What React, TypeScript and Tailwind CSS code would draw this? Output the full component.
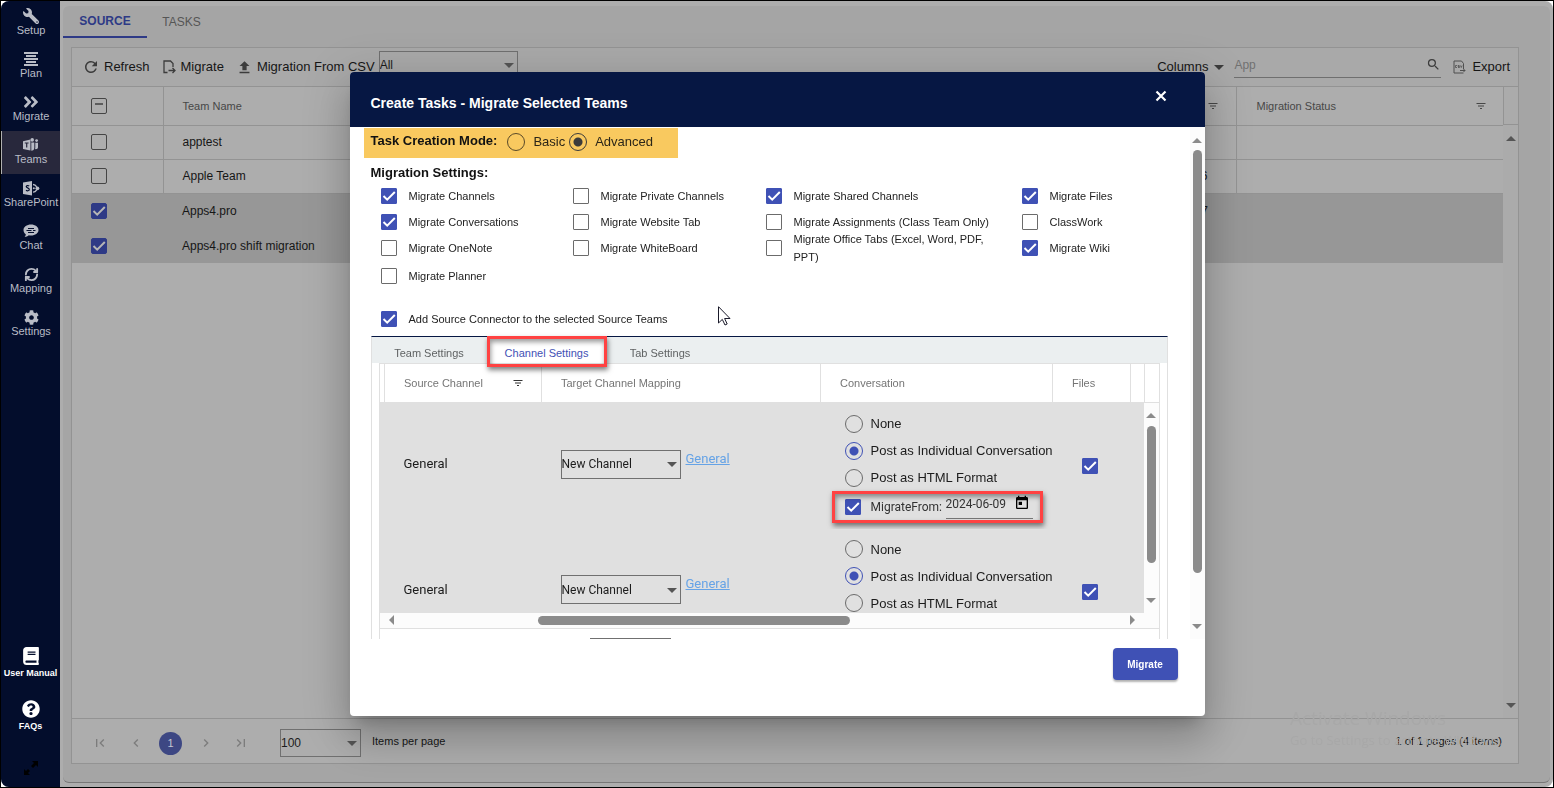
import React from "react";
import { RefreshCw } from "lucide-react";
import {
  FaWrench,
  FaAngleDoubleRight,
  FaCog,
  FaBook,
  FaQuestionCircle,
} from "react-icons/fa";
import {
  MdRefresh,
  MdFileUpload,
  MdSearch,
  MdFilterList,
  MdToday,
  MdFirstPage,
  MdLastPage,
  MdChevronLeft,
  MdChevronRight,
} from "react-icons/md";

function PlanIcon() {
  return (
    <svg width="16" height="14" viewBox="0 0 16 14" fill="currentColor" aria-hidden="true">
      <rect x="1" y="0" width="14" height="2" />
      <rect x="3" y="3" width="10" height="2" />
      <rect x="1" y="6" width="14" height="2" />
      <rect x="3" y="9" width="10" height="2" />
      <rect x="1" y="12" width="14" height="2" />
    </svg>
  );
}

function TeamsIcon() {
  return (
    <svg width="16" height="14" viewBox="0 0 16 14" fill="currentColor" aria-hidden="true">
      <path d="M0 3.2 7.4 1.6v11L0 11z" />
      <path d="M1.8 5h3.8M3.7 5v4.4" stroke="#28283c" strokeWidth="1.2" fill="none" />
      <circle cx="9.2" cy="1.9" r="1.8" />
      <circle cx="13.6" cy="2.6" r="1.4" />
      <path d="M8.3 4.6h3v5.2c0 1.9-1.2 2.9-3 2.9z" />
      <path d="M12.3 4.8H15v4.4c0 1.3-.9 2-2.4 2-.2 0-.4 0-.6-.1.2-.4.3-.9.3-1.5z" />
    </svg>
  );
}

function SharePointIcon() {
  return (
    <svg width="17" height="15" viewBox="0 0 17 15" fill="currentColor" aria-hidden="true">
      <path d="M0 1.6 9 0v14.4L0 12.9z" />
      <path
        d="M6.2 4.9c-.7-.5-3-.7-3 .7 0 1.500 3.100 1 3.100 2.900 0 1.600-2.300 1.500-3.300.8"
        stroke="#030d2c"
        strokeWidth="1.2"
        fill="none"
      />
      <path
        d="M10 3.500c1.800 0 2.800.8 3.700 2.300M10 11.100c1.800 0 2.800-.8 3.700-2.300"
        stroke="currentColor"
        strokeWidth="1.300"
        fill="none"
      />
      <circle cx="14.400" cy="7.300" r="1.900" />
      <circle cx="10.800" cy="7.300" r="1" />
    </svg>
  );
}

function ChatIcon() {
  return (
    <svg width="16" height="14" viewBox="0 0 16 14" aria-hidden="true">
      <path
        d="M8 .5c4.200 0 7.500 2.400 7.500 5.500S12.200 11.500 8 11.500c-.8 0-1.500-.1-2.200-.2C4.600 12.400 3 13 1.600 13c.8-.8 1.100-1.700 1.200-2.700C1.400 9.300.5 7.700.5 6 .5 2.900 3.800.5 8 .5z"
        fill="currentColor"
      />
      <path d="M5 4.500h6M3.500 6.500h5M10 6.500h2.500M5 8.500h6" stroke="#030d2c" fill="none" />
    </svg>
  );
}

function ExpandIcon() {
  return (
    <svg width="14" height="14" viewBox="0 0 14 14" aria-hidden="true">
      <path d="M8 0h6v6l-2-2-3 3-2-2 3-3zM0 8l2 2 2-2 2 2-2 2 2 2H0z" fill="#000" />
    </svg>
  );
}

function FileMoveIcon() {
  return (
    <svg width="13" height="14" viewBox="0 0 13 14" fill="none" stroke="#3c3c3c" strokeWidth="1.300" aria-hidden="true">
      <path d="M4.500 12.500H1V1h6.500L10 3.500V7" />
      <path d="M5.500 10.500h6.500M9.500 8l2.500 2.500L9.500 13" />
    </svg>
  );
}

function CsvIcon() {
  return (
    <svg width="13" height="14" viewBox="0 0 13 14" fill="none" stroke="#4f4f4f" strokeWidth="1" aria-hidden="true">
      <path d="M10.500 9V3.500L8.500 1H1v12h9.500" />
      <path d="M4 5.500H2.500v2H4M6.500 5.500H5v1h1.500v1H5M7.500 5.500l.8 2 .8-2" strokeWidth="0.800" />
      <path d="M7 10.500h5M10.500 9l1.500 1.500-1.500 1.500" />
    </svg>
  );
}

function CloseIcon() {
  return (
    <svg width="12" height="12" viewBox="0 0 12 12" aria-hidden="true">
      <path d="M1.500 1.500l9 9M10.500 1.500l-9 9" stroke="currentColor" strokeWidth="2.200" fill="none" />
    </svg>
  );
}

const navItems = [
  { label: "Setup", icon: <FaWrench size={16} className="-scale-x-100" /> },
  { label: "Plan", icon: <PlanIcon /> },
  { label: "Migrate", icon: <FaAngleDoubleRight size={18} /> },
  { label: "Teams", icon: <TeamsIcon />, active: true },
  { label: "SharePoint", icon: <SharePointIcon /> },
  { label: "Chat", icon: <ChatIcon /> },
  { label: "Mapping", icon: <RefreshCw size={15} strokeWidth={3} /> },
  { label: "Settings", icon: <FaCog size={15} /> },
];

function Sidebar() {
  return (
    <nav className="flex w-[59px] shrink-0 flex-col bg-[#030d2c] pt-px text-[11px] leading-3 text-[#b9bcc6]">
      {navItems.map((item) => (
        <a
          key={item.label}
          href="#"
          className={
            item.active
              ? "flex h-[43px] flex-col items-center border-l border-[#b0b0b0] bg-[#28283c] pt-[6px]"
              : "flex h-[43px] flex-col items-center border-l border-transparent pt-[6px]"
          }
        >
          <span className="flex h-4 items-center justify-center">{item.icon}</span>
          <span>{item.label}</span>
        </a>
      ))}
      <div className="mt-auto flex flex-col text-[9px] font-bold text-white">
        <a href="#" className="flex h-[53px] flex-col items-center">
          <span className="flex h-5 items-center">
            <FaBook size={18} />
          </span>
          <span className="mt-px whitespace-nowrap">User Manual</span>
        </a>
        <a href="#" className="flex h-[62px] flex-col items-center">
          <span className="flex h-5 items-center">
            <FaQuestionCircle size={18} />
          </span>
          <span className="mt-px">FAQs</span>
        </a>
        <button type="button" aria-label="Expand menu" className="flex h-[26px] justify-center">
          <ExpandIcon />
        </button>
      </div>
    </nav>
  );
}

function Check({
  id,
  checked = false,
  dim = false,
  label,
}: {
  id: string;
  checked?: boolean;
  dim?: boolean;
  label?: string;
}) {
  return (
    <span className="relative inline-flex h-4 w-4 shrink-0">
      <input
        id={id}
        type="checkbox"
        aria-label={label}
        defaultChecked={checked}
        className={
          dim
            ? "peer h-4 w-4 appearance-none rounded-[2px] border border-[#454545] checked:border-[#2e3a86] checked:bg-[#2e3a86]"
            : "peer h-4 w-4 appearance-none rounded-[1px] border border-[#6b6b6b] bg-white checked:border-[#3f51b5] checked:bg-[#3f51b5]"
        }
      />
      <svg
        viewBox="0 0 16 16"
        className={
          dim
            ? "pointer-events-none absolute inset-0 hidden text-[#b5b5b5] peer-checked:block"
            : "pointer-events-none absolute inset-0 hidden text-white peer-checked:block"
        }
        aria-hidden="true"
      >
        <path d="M2.500 8 6.200 11.700 13.800 4" fill="none" stroke="currentColor" strokeWidth="2" />
      </svg>
    </span>
  );
}

function Radio({
  id,
  name,
  label,
  checked = false,
  grey = false,
}: {
  id: string;
  name: string;
  label: string;
  checked?: boolean;
  grey?: boolean;
}) {
  return (
    <label htmlFor={id} className="flex items-center gap-2 whitespace-nowrap">
      <input
        id={id}
        name={name}
        type="radio"
        defaultChecked={checked}
        className={
          grey
            ? "h-[18px] w-[18px] shrink-0 appearance-none rounded-full border border-[#5a4a28] checked:border-[#3b3b3b] checked:bg-[radial-gradient(circle,#3b3b3b_0_4px,transparent_5px)]"
            : "h-[18px] w-[18px] shrink-0 appearance-none rounded-full border border-[#6b6b6b] checked:border-[#3f51b5] checked:bg-[radial-gradient(circle,#3f51b5_0_4px,transparent_5px)]"
        }
      />
      {label}
    </label>
  );
}

function Arrow({ dir, className = "" }: { dir: "up" | "down" | "left" | "right"; className?: string }) {
  const points = {
    up: "0,8 5,3 10,8",
    down: "0,3 5,8 10,3",
    left: "8,0 3,5 8,10",
    right: "3,0 8,5 3,10",
  };
  return (
    <svg width="10" height="10" viewBox="0 0 10 10" fill="currentColor" className={className} aria-hidden="true">
      <polygon points={points[dir]} />
    </svg>
  );
}

function Select({
  label,
  value,
  className,
}: {
  label: string;
  value: string;
  className: string;
}) {
  return (
    <span className={"relative inline-flex items-center " + className}>
      <select
        aria-label={label}
        defaultValue={value}
        className="h-full w-full appearance-none border border-[#707070] text-[12px] text-[#1c1c1c]"
      >
        <option>{value}</option>
      </select>
      <Arrow dir="down" className="pointer-events-none absolute right-1 text-[#555555]" />
    </span>
  );
}

const teams = [
  { name: "apptest", count: "", checked: false },
  { name: "Apple Team", count: "6", checked: false },
  { name: "Apps4.pro", count: "7", checked: true },
  { name: "Apps4.pro shift migration", count: "", checked: true },
];

function TeamsGrid() {
  return (
    <section className="mt-[9px] mr-[31px] mb-[18px] ml-2 flex flex-1 flex-col border border-[#939393] bg-[#adadad]">
      <div className="flex h-[39px] shrink-0 items-center border-b border-[#939393] bg-[#a9a9a9] pr-2 pl-[10px] text-[13px] text-[#161616]">
        <button type="button" className="flex items-center gap-1">
          <MdRefresh size={18} className="text-[#3c3c3c]" />
          Refresh
        </button>
        <button type="button" className="ml-[13px] flex items-center gap-[5px]">
          <FileMoveIcon />
          Migrate
        </button>
        <button type="button" className="ml-3 flex items-center gap-1 whitespace-nowrap">
          <MdFileUpload size={17} className="text-[#3c3c3c]" />
          Migration From CSV
        </button>
        <Select label="Filter" value="All" className="mb-1 ml-1 h-7 w-[139px]" />
        <button type="button" className="ml-auto flex items-center gap-[6px]">
          Columns
          <Arrow dir="down" className="text-[#3c3c3c]" />
        </button>
        <label className="mb-1 ml-[10px] flex h-[26px] w-[207px] items-center border-b border-[#6f6f6f]">
          <input
            type="text"
            aria-label="Search"
            placeholder="App"
            className="min-w-0 flex-1 text-[12px] placeholder:text-[#717171]"
          />
          <MdSearch size={15} className="text-[#3c3c3c]" />
        </label>
        <button type="button" className="ml-3 flex items-center gap-[6px]">
          <CsvIcon />
          Export
        </button>
      </div>
      <div className="flex flex-1">
        <table className="w-full table-fixed self-start text-left text-[12px] text-[#161616]">
          <thead>
            <tr className="h-[38px] border-b border-[#939393] text-[11px] text-[#474747]">
              <th className="w-[91px] border-r border-[#939393] pl-[19px]">
                <span className="flex h-4 w-4 items-center justify-center rounded-[2px] border border-[#454545]">
                  <span className="mb-1 h-[2px] w-2 bg-[#5c5c5c]" />
                </span>
              </th>
              <th className="pl-[19px] font-normal">Team Name</th>
              <th className="w-[120px] border-r border-[#939393] pr-[17px]">
                <MdFilterList size={12} className="ml-auto" />
              </th>
              <th className="w-[267px] pl-5 font-normal">
                <span className="flex items-center justify-between pr-4">
                  Migration Status
                  <MdFilterList size={12} />
                </span>
              </th>
            </tr>
          </thead>
          <tbody>
            {teams.map((t, i) => (
              <tr
                key={t.name}
                className={
                  t.checked
                    ? "h-[35px] bg-[#979797]"
                    : "h-[34px] border-b border-[#939393]"
                }
              >
                <td className={t.checked ? "pl-[19px]" : "border-r border-[#939393] pl-[19px]"}>
                  <span className="flex">
                    <Check id={"team-" + i} checked={t.checked} dim label={"Select " + t.name} />
                  </span>
                </td>
                <td className="pl-[19px]">{t.name}</td>
                <td
                  className={
                    t.checked ? "pr-7 text-right" : "border-r border-[#939393] pr-7 text-right"
                  }
                >
                  {t.count}
                </td>
                <td />
              </tr>
            ))}
          </tbody>
        </table>
        <div className="flex w-[15px] shrink-0 flex-col items-center bg-[#ababab] pb-2 text-[#555555]">
          <span className="h-[38px] w-full border-b border-l border-[#939393]" />
          <Arrow dir="up" className="mt-2" />
          <Arrow dir="down" className="mt-auto" />
        </div>
      </div>
      <div className="flex h-[45px] shrink-0 items-center border-t border-[#939393] pt-1 pr-4 pl-5 text-[11px] text-[#161616]">
        <div className="flex items-center text-[#7c7c7c]">
          <button type="button" aria-label="First page" className="w-9">
            <MdFirstPage size={16} />
          </button>
          <button type="button" aria-label="Previous page" className="w-[31px]">
            <MdChevronLeft size={16} />
          </button>
          <button
            type="button"
            className="h-[23px] w-[23px] rounded-full bg-[#3d4783] text-[#c4c6d2]"
          >
            1
          </button>
          <button type="button" aria-label="Next page" className="ml-4 w-[35px]">
            <MdChevronRight size={16} />
          </button>
          <button type="button" aria-label="Last page" className="w-9">
            <MdLastPage size={16} />
          </button>
        </div>
        <Select label="Items per page" value="100" className="ml-[11px] h-7 w-[81px]" />
        <span className="ml-[11px] pb-1">Items per page</span>
        <span className="ml-auto pb-1">1 of 1 pages (4 items)</span>
      </div>
    </section>
  );
}

const settings: [string, boolean][] = [
  ["Migrate Channels", true],
  ["Migrate Private Channels", false],
  ["Migrate Shared Channels", true],
  ["Migrate Files", true],
  ["Migrate Conversations", true],
  ["Migrate Website Tab", false],
  ["Migrate Assignments (Class Team Only)", false],
  ["ClassWork", false],
  ["Migrate OneNote", false],
  ["Migrate WhiteBoard", false],
  ["Migrate Office Tabs (Excel, Word, PDF, PPT)", false],
  ["Migrate Wiki", true],
  ["Migrate Planner", false],
];

function ChannelRow({ index, from }: { index: number; from?: string }) {
  const id = "channel-" + index;
  return (
    <tr className="h-[126px]">
      <td />
      <td className="pb-1 pl-[19px] font-[Roboto,sans-serif] text-[13px]">General</td>
      <td className="pb-1 pl-[19px]">
        <span className="flex font-[Roboto,sans-serif]">
          <Select label="Target channel" value="New Channel" className="h-[29px] w-[120px]" />
          <a href="#" className="ml-[5px] text-[13px] leading-[18px] text-[#66a3e6] underline">
            General
          </a>
        </span>
      </td>
      <td className="overflow-hidden pl-6 align-top text-[13px]">
        <div className="flex flex-col pt-[7px]">
          <div className="flex h-[27px] items-center">
            <Radio id={id + "-none"} name={id} label="None" />
          </div>
          <div className="flex h-[27px] items-center">
            <Radio id={id + "-post"} name={id} label="Post as Individual Conversation" checked />
          </div>
          <div className="flex h-[27px] items-center">
            <Radio id={id + "-html"} name={id} label="Post as HTML Format" />
          </div>
          {from && (
            <div className="relative flex h-8 items-center font-[Roboto,sans-serif] text-[12px]">
              <Check id={id + "-from"} checked />
              <label htmlFor={id + "-from"} className="ml-[10px] w-[75px] text-[#333333]">
                MigrateFrom:
              </label>
              <span className="flex h-6 w-[87px] items-start border-b border-[#777777]">
                <input
                  type="text"
                  aria-label="Migrate from date"
                  defaultValue={from}
                  className="w-[68px] text-[#333333]"
                />
                <MdToday size={16} className="shrink-0 text-black" />
              </span>
              <span className="pointer-events-none absolute inset-y-0 right-[10px] -left-[13px] border-[3px] border-[#ff4242] shadow-[1px_3px_5px_rgba(0,0,0,0.5),inset_1px_3px_5px_rgba(0,0,0,0.4)]" />
            </div>
          )}
        </div>
      </td>
      <td className="pl-[29px]">
        <span className="flex">
          <Check id={id + "-files"} checked label="Files" />
        </span>
      </td>
      <td />
    </tr>
  );
}

function ChannelTable() {
  const th = "border-r border-[#e0e0e0] pl-[19px] font-normal";
  return (
    <div className="mx-[7px] border-x border-t border-[#e0e0e0]">
      <div className="flex h-[249px] overflow-hidden">
        <table className="w-full table-fixed self-start bg-[#e0e0e0] text-left text-[#1c1c1c]">
          <thead>
            <tr className="h-[39px] border-b border-[#e0e0e0] bg-white text-[11px] text-[#757575]">
              <th className="w-[5px] border-r border-[#e0e0e0]" />
              <th className={th + " w-[157px]"}>
                <span className="flex items-center justify-between pr-[17px]">
                  Source Channel
                  <MdFilterList size={12} className="text-[#333333]" />
                </span>
              </th>
              <th className={th + " w-[279px]"}>Target Channel Mapping</th>
              <th className={th + " w-[232px]"}>Conversation</th>
              <th className={th + " w-[78px]"}>Files</th>
              <th />
            </tr>
          </thead>
          <tbody>
            <ChannelRow index={0} from="2024-06-09" />
            <ChannelRow index={1} />
          </tbody>
        </table>
        <div className="flex w-[15px] shrink-0 flex-col items-center bg-[#fcfcfc] pb-2 text-[#8b8b8b]">
          <span className="h-[39px] w-full shrink-0 border-b border-l border-[#e0e0e0] bg-white" />
          <Arrow dir="up" className="mt-[7px] shrink-0" />
          <span className="mt-[6px] h-[137px] w-[9px] rounded-full bg-[#8b8b8b]" />
          <Arrow dir="down" className="mt-auto" />
        </div>
      </div>
      <div className="flex h-4 items-center border-b border-[#e0e0e0] bg-[#fcfcfc] pr-[22px] pl-[6px] text-[#8b8b8b]">
        <Arrow dir="left" />
        <div className="flex flex-1 pl-[142px]">
          <span className="h-[9px] w-[53%] rounded-full bg-[#8b8b8b]" />
        </div>
        <Arrow dir="right" />
      </div>
      <div className="flex pt-[9px] pl-[210px]">
        <Select label="Page size" value="" className="h-7 w-[81px]" />
      </div>
    </div>
  );
}

function TaskDialog() {
  return (
    <div className="fixed inset-0 flex items-center justify-center">
      <div
        role="dialog"
        aria-labelledby="dialog-title"
        className="flex w-[855px] max-w-full flex-col overflow-hidden rounded-[4px] bg-white shadow-[0_11px_15px_-7px_rgba(0,0,0,0.2),0_24px_38px_3px_rgba(0,0,0,0.14),0_9px_46px_8px_rgba(0,0,0,0.12)]"
      >
        <header className="flex h-[55px] items-center justify-between bg-[#061743] pr-[38px] pl-[21px] text-white">
          <h1 id="dialog-title" className="pt-2 text-[14px] font-bold">
            Create Tasks - Migrate Selected Teams
          </h1>
          <button type="button" aria-label="Close" className="pb-[7px]">
            <CloseIcon />
          </button>
        </header>
        <div className="flex h-[65vh] overflow-hidden">
          <div className="min-w-0 flex-1 pr-[22px] pl-[21px]">
            <div className="mt-px -ml-[7px] flex h-[30px] w-[314px] items-center bg-[#f9c95f] pb-[2px] pl-[7px] text-[13px] text-[#2c2618]">
              <span className="mr-[10px] pb-[2px] font-bold text-[#111111]">Task Creation Mode:</span>
              <Radio id="mode-basic" name="mode" label="Basic" grey />
              <span className="w-1" />
              <Radio id="mode-advanced" name="mode" label="Advanced" checked grey />
            </div>
            <h2 className="flex h-[25px] items-center pt-1 text-[13px] font-bold text-[#111111]">
              Migration Settings:
            </h2>
            <div className="grid grid-cols-[192fr_193fr_256fr_146fr] grid-rows-[26px_26px_26px_30px] pl-[10px] text-[11px] leading-[18px] text-[#222222]">
              {settings.map(([label, on], i) => (
                <label key={label} htmlFor={"setting-" + i} className="flex items-center gap-3 pr-4">
                  <Check id={"setting-" + i} checked={on} />
                  <span>{label}</span>
                </label>
              ))}
            </div>
            <label
              htmlFor="add-connector"
              className="mt-[15px] flex h-[26px] items-center gap-3 pl-[10px] text-[11px] text-[#222222]"
            >
              <Check id="add-connector" checked />
              Add Source Connector to the selected Source Teams
            </label>
            <div className="mt-[4px] border-x border-t border-x-[#e0e0e0] border-t-[#061743]">
              <div role="tablist" className="flex h-[26px] bg-[#ebeff0] text-[11px] text-[#5f6263]">
                <button role="tab" type="button" className="w-[115px] pt-[7px] whitespace-nowrap">
                  Team Settings
                </button>
                <button
                  role="tab"
                  type="button"
                  aria-selected="true"
                  className="relative w-[120px] bg-white pt-[6px] whitespace-nowrap text-[#3f51b5]"
                >
                  Channel Settings
                  <span className="pointer-events-none absolute inset-x-0 -top-px -bottom-1 border-[3px] border-[#ff4242] shadow-[1px_3px_5px_rgba(0,0,0,0.5),inset_1px_3px_5px_rgba(0,0,0,0.4)]" />
                </button>
                <button role="tab" type="button" className="w-[107px] pt-[7px] whitespace-nowrap">
                  Tab Settings
                </button>
              </div>
              <ChannelTable />
            </div>
          </div>
          <div className="flex w-[15px] shrink-0 flex-col items-center bg-[#fcfcfc] py-2 text-[#8b8b8b]">
            <Arrow dir="up" className="shrink-0" />
            <span className="mt-[5px] h-[423px] w-[9px] rounded-full bg-[#8b8b8b]" />
            <Arrow dir="down" className="mt-auto shrink-0" />
          </div>
        </div>
        <footer className="flex justify-end pt-[9px] pr-[27px] pb-9">
          <button
            type="button"
            className="h-8 w-[65px] rounded-[4px] bg-[#3f51b5] text-[10px] font-bold text-white shadow-[0_2px_2px_rgba(0,0,0,0.3)]"
          >
            Migrate
          </button>
        </footer>
        <svg
          width="14"
          height="20"
          viewBox="0 0 14 20"
          className="pointer-events-none fixed top-[306px] left-[718px]"
          aria-hidden="true"
        >
          <path
            d="M.5.7v16.300l3.800-3.600 2.700 5.600 2.200-1-2.600-5.500h5.400z"
            fill="#fff"
            stroke="#1a1a2a"
          />
        </svg>
      </div>
    </div>
  );
}

export default function App() {
  return (
    <div className="flex min-h-screen border border-black bg-white font-['Liberation_Sans',Arial,sans-serif]">
      <div className="flex flex-1 overflow-hidden rounded-lg bg-[#adadad]">
        <Sidebar />
        <main className="mt-[5px] mr-[3px] mb-1 ml-[3px] flex min-w-0 flex-1 flex-col rounded-md border-b border-[#777777] bg-[#a5a5a5]">
          <div role="tablist" className="flex h-8 text-[12px] text-[#555555]">
            <button
              role="tab"
              type="button"
              aria-selected="true"
              className="w-[84px] border-b-2 border-[#2e3a86] font-bold text-[#2e3a86]"
            >
              SOURCE
            </button>
            <button role="tab" type="button" className="w-[69px]">
              TASKS
            </button>
          </div>
          <TeamsGrid />
        </main>
      </div>
      <div className="pointer-events-none fixed right-7 bottom-[38px] w-[236px] font-['Open_Sans',sans-serif] whitespace-nowrap text-[#a8a8a8]">
        <p className="text-[19px] leading-6">Activate Windows</p>
        <p className="text-[13px] leading-5">Go to Settings to activate Windows.</p>
      </div>
      <TaskDialog />
    </div>
  );
}
